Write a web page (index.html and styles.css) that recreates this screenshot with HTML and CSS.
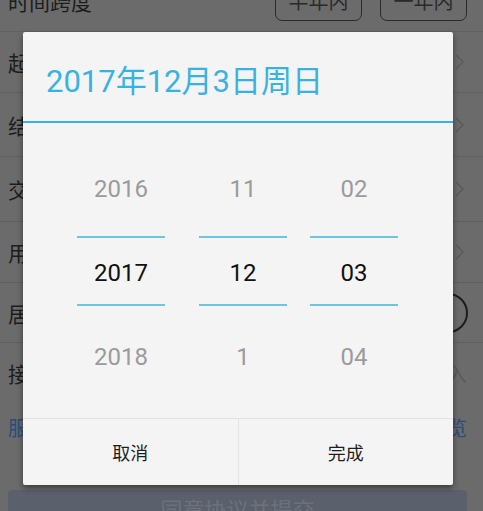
FILE: index.html
```html
<!DOCTYPE html>
<html lang="zh">
<head>
<meta charset="utf-8">
<title>日期选择</title>
<link rel="stylesheet" href="styles.css">
</head>
<body>
<div class="page">
  <div class="row row-top">
    <span class="label">时间跨度</span>
    <div class="spans">
      <span class="span-btn">半年内</span>
      <span class="span-btn">一年内</span>
    </div>
  </div>
  <div class="row r1"><span class="label">起始日期</span><svg class="chev" viewBox="0 0 10 16"><polyline points="1,1 8,8 1,15"/></svg></div>
  <div class="row r2"><span class="label">结束日期</span><svg class="chev" viewBox="0 0 10 16"><polyline points="1,1 8,8 1,15"/></svg></div>
  <div class="row r3"><span class="label">交易类型</span><svg class="chev" viewBox="0 0 10 16"><polyline points="1,1 8,8 1,15"/></svg></div>
  <div class="row r4"><span class="label">用途说明</span><svg class="chev" viewBox="0 0 10 16"><polyline points="1,1 8,8 1,15"/></svg></div>
  <div class="row r5"><span class="label">居民身份</span><span class="knob"></span></div>
  <div class="row r6"><span class="label">接收邮箱</span><span class="placeholder">请输入</span></div>
  <div class="links"><span>服务协议</span><span>协议预览</span></div>
  <div class="submit">同意协议并提交</div>
</div>

<div class="dialog">
  <div class="dlg-title">2017年12月3日周日</div>
  <div class="pickers">
    <div class="col col-year">
      <div class="item">2016</div>
      <div class="item sel">2017</div>
      <div class="item next">2018</div>
    </div>
    <div class="col col-month">
      <div class="item">11</div>
      <div class="item sel">12</div>
      <div class="item next">1</div>
    </div>
    <div class="col col-day">
      <div class="item">02</div>
      <div class="item sel">03</div>
      <div class="item next">04</div>
    </div>
  </div>
  <div class="dlg-footer">
    <div class="dlg-btn">取消</div>
    <div class="dlg-btn">完成</div>
  </div>
</div>
</body>
</html>
```
FILE: styles.css
```css
html, body {
  margin: 0;
  padding: 0;
}
body {
  width: 483px;
  height: 511px;
  overflow: hidden;
  background: #6b6b6b;
  font-family: Roboto, "Noto Sans CJK SC", sans-serif;
  position: relative;
}
.page {
  margin-top: -30px;
}
.row {
  display: flex;
  align-items: center;
  justify-content: space-between;
  height: 61px;
  padding: 0 16px 0 8px;
  border-bottom: 1px solid #606060;
}
.row-top { height: 61px; }
.r1 { height: 60px; }
.r2 { height: 63px; }
.r3 { height: 64px; }
.r4 { height: 60px; }
.r5 { height: 59px; }
.r6 { height: 60px; border-bottom: none; }
.label {
  font-size: 21px;
  color: #1d1d1d;
}
.spans {
  display: flex;
  gap: 18px;
}
.span-btn {
  box-sizing: border-box;
  width: 87px;
  height: 40px;
  border: 1.5px solid #2a2a2a;
  border-radius: 7px;
  font-size: 20px;
  color: #2a2a2a;
  display: flex;
  align-items: center;
  justify-content: center;
}
.chev {
  width: 10px;
  height: 16px;
  margin-right: 2px;
  fill: none;
  stroke: #5a5a5a;
  stroke-width: 1.4;
}
.knob {
  box-sizing: border-box;
  width: 40px;
  height: 40px;
  border-radius: 50%;
  border: 2.5px solid #1d1d1d;
  margin-right: -1px;
}
.placeholder {
  font-size: 20px;
  color: #5b5b5b;
}
.links {
  display: flex;
  justify-content: space-between;
  align-items: center;
  height: 48px;
  padding: 0 16px 0 8px;
  font-size: 20px;
  color: #2b4d77;
}
.submit {
  box-sizing: border-box;
  margin: 39px 16px 0 8px;
  height: 21px;
  padding-top: 10px;
  overflow: hidden;
  border-radius: 4px 4px 0 0;
  background: #5a616c;
  color: #6b727d;
  font-size: 22px;
  line-height: 22px;
  text-align: center;
}

/* dialog */
.dialog {
  position: absolute;
  left: 23px;
  top: 32px;
  width: 430px;
  height: 453px;
  background: #f4f4f4;
  border-radius: 2px;
  box-shadow: 0 3px 6px rgba(0, 0, 0, 0.45);
  display: flex;
  flex-direction: column;
}
.dlg-title {
  box-sizing: border-box;
  height: 91px;
  padding: 3px 0 0 23px;
  display: flex;
  align-items: center;
  font-size: 31px;
  color: #38b3e1;
  border-bottom: 2px solid #38b3e1;
}
.pickers {
  height: 295px;
  display: flex;
  padding-left: 54px;
}
.col {
  width: 88px;
  padding-top: 24px;
  display: flex;
  flex-direction: column;
}
.col-month { margin-left: 34px; }
.col-day { margin-left: 23px; }
.item {
  height: 84px;
  line-height: 84px;
  text-align: center;
  font-size: 24px;
  color: #9b9b9b;
}
.item.sel {
  box-sizing: border-box;
  height: 70px;
  margin-top: 5px;
  padding-top: 4px;
  line-height: 62px;
  border-top: 2px solid #6fc3e3;
  border-bottom: 2px solid #6fc3e3;
  color: #111;
}
.item.next {
  margin-top: 9px;
}
.dlg-footer {
  flex: 1;
  display: flex;
  border-top: 1px solid #e2e2e2;
}
.dlg-btn {
  flex: 1;
  display: flex;
  align-items: center;
  justify-content: center;
  font-size: 18px;
  color: #1f1f1f;
}
.dlg-btn + .dlg-btn {
  border-left: 1px solid #e4e4e4;
}
```
